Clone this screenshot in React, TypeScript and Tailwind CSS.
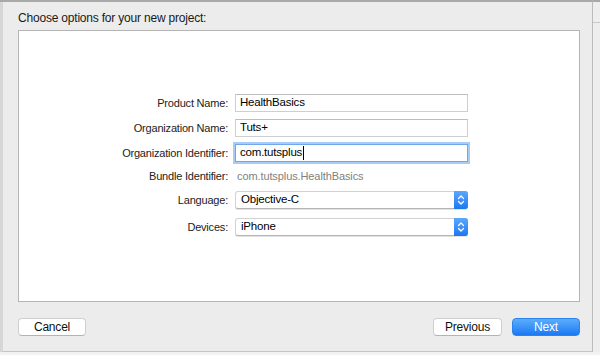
const font = "font-['Liberation_Sans','Helvetica_Neue',Arial,sans-serif]";

const labelCls = "w-[210px] text-right text-[11px] tracking-[-0.2px] text-[#222] pr-[1px]";

function Field({ label, value, focused }: { label: string; value: string; focused?: boolean }) {
  return (
    <div className="flex items-center h-[18px]">
      <div className={labelCls}>{label}</div>
      <div
        className={
          focused
            ? "ml-[6px] w-[233px] h-[18px] flex items-center bg-white border border-[#6fa6ec] shadow-[0_0_0_2px_#a9ccf6] pl-[4px] text-[11.5px] tracking-[-0.2px] text-black"
            : "ml-[6px] w-[233px] h-[18px] flex items-center bg-white border border-[#cfcfcf] border-t-[#bdbdbd] pl-[4px] text-[11.5px] tracking-[-0.2px] text-black"
        }
      >
        {value}
        {focused && <span className="ml-[1px] w-px h-[14px] bg-black" />}
      </div>
    </div>
  );
}

function Select({ label, value }: { label: string; value: string }) {
  return (
    <div className="flex items-center h-[18px]">
      <div className={labelCls}>{label}</div>
      <div className="ml-[6px] w-[233px] h-[18px] flex bg-white rounded-[3px] border border-[#d2d2d2] border-b-[#b5b5b5] shadow-[0_1px_0_#e2e2e2]">
        <div className="flex-1 flex items-center pl-[5px] text-[11.5px] tracking-[-0.2px] text-black">{value}</div>
        <div className="w-[14px] -my-px -mr-px rounded-r-[3px] bg-gradient-to-b from-[#5aa8fb] to-[#1a78f2] flex items-center justify-center">
          <svg width="8" height="12" viewBox="0 0 8 12" fill="none" stroke="white" strokeWidth="1.3" strokeLinecap="round" strokeLinejoin="round">
            <path d="M1.5 4.5 L4 2 L6.5 4.5" />
            <path d="M1.5 7.5 L4 10 L6.5 7.5" />
          </svg>
        </div>
      </div>
    </div>
  );
}

export default function App() {
  return (
    <div className={`${font} w-[600px] h-[355px] flex bg-[#f2f2f2] overflow-hidden`}>
      <div className="w-[3px] h-[352px] bg-[#d6d6d6] border-t-2 border-[#a9a9a9]" />
      <div className="w-[590px] h-[352px] flex flex-col bg-[#ececec] border-t-2 border-[#a9a9a9] border-r border-r-[#bcbcbc] border-b border-b-[#c4c4c4] pl-[15px] pr-[12px]">
        <div className="h-[28px] flex items-center pt-[3px] text-[12px] tracking-[-0.2px] text-[#1a1a1a]">
          Choose options for your new project:
        </div>
        <div className="h-[272px] bg-white border border-[#b5b5b5] flex flex-col pt-[63px]">
          <div className="flex flex-col gap-[7px]">
            <Field label="Product Name:" value="HealthBasics" />
            <Field label="Organization Name:" value="Tuts+" />
            <Field label="Organization Identifier:" value="com.tutsplus" focused />
          </div>
          <div className="flex items-center h-[18px] mt-[5px]">
            <div className={labelCls}>Bundle Identifier:</div>
            <div className="ml-[8px] text-[11px] tracking-[-0.1px] text-[#7f7f7f]">com.tutsplus.HealthBasics</div>
          </div>
          <div className="flex flex-col gap-[9px] mt-[6px]">
            <Select label="Language:" value="Objective-C" />
            <Select label="Devices:" value="iPhone" />
          </div>
        </div>
        <div className="flex items-center mt-[16px]">
          <button className="w-[68px] h-[18px] bg-white rounded-[4px] border border-[#cfcfcf] border-b-[#b3b3b3] text-[12px] tracking-[-0.2px] text-[#111] leading-none">
            Cancel
          </button>
          <div className="flex-1" />
          <button className="w-[69px] h-[18px] bg-white rounded-[4px] border border-[#cfcfcf] border-b-[#b3b3b3] text-[12px] tracking-[-0.2px] text-[#111] leading-none">
            Previous
          </button>
          <button className="ml-[10px] w-[68px] h-[18px] rounded-[4px] bg-gradient-to-b from-[#5cadfc] to-[#1878f3] border border-[#2a84f0] text-[12px] tracking-[-0.2px] text-white leading-none">
            Next
          </button>
        </div>
      </div>
      <div className="flex-1 h-[352px] flex flex-col bg-[#eeeeee] border-t-2 border-[#a9a9a9]">
        <div className="h-[21px] border-b border-[#c8c8c8]" />
      </div>
    </div>
  );
}
